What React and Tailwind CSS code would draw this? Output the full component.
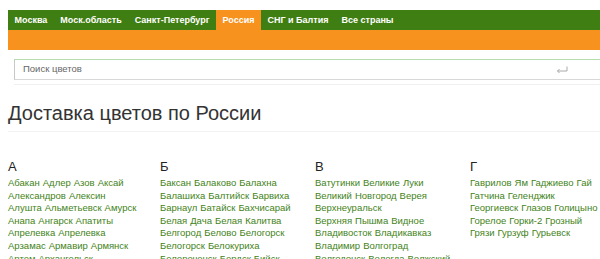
const navItems = [
  { label: 'Москва' },
  { label: 'Моск.область' },
  { label: 'Санкт-Петербург' },
  { label: 'Россия', active: true },
  { label: 'СНГ и Балтия' },
  { label: 'Все страны' },
];

const columns = [
  {
    letter: 'А',
    cities: [
      'Абакан Адлер Азов Аксай',
      'Александров Алексин',
      'Алушта Альметьевск Амурск',
      'Анапа Ангарск Апатиты',
      'Апрелевка Апрелевка',
      'Арзамас Армавир Армянск',
      'Артем Архангельск',
    ],
  },
  {
    letter: 'Б',
    cities: [
      'Баксан Балаково Балахна',
      'Балашиха Балтийск Барвиха',
      'Барнаул Батайск Бахчисарай',
      'Белая Дача Белая Калитва',
      'Белгород Белово Белогорск',
      'Белогорск Белокуриха',
      'Белореченск Бердск Бийск',
    ],
  },
  {
    letter: 'В',
    cities: [
      'Ватутинки Великие Луки',
      'Великий Новгород Верея',
      'Верхнеуральск',
      'Верхняя Пышма Видное',
      'Владивосток Владикавказ',
      'Владимир Волгоград',
      'Волгодонск Вологда Волжский',
    ],
  },
  {
    letter: 'Г',
    cities: [
      'Гаврилов Ям Гаджиево Гай',
      'Гатчина Геленджик',
      'Георгиевск Глазов Голицыно',
      'Горелое Горки-2 Грозный',
      'Грязи Гурзуф Гурьевск',
    ],
  },
];

const App = () => {
  return (
    <div className="w-[600px] h-[259px] overflow-hidden bg-white font-['Liberation_Sans',Arial,sans-serif]">
      <div className="pl-[8px] pt-[10px]">
        {/* Top navigation */}
        <nav className="flex h-[20px] bg-[#3f7e12]">
          {navItems.map((item) => (
            <a
              key={item.label}
              href="#"
              className={`flex items-center px-[6.5px] text-[9px] font-bold text-white leading-none ${
                item.active ? 'bg-[#f7921e]' : ''
              }`}
            >
              {item.label}
            </a>
          ))}
        </nav>
        <div className="h-[20px] bg-[#f7921e]"></div>
      </div>

      {/* Search */}
      <div className="pl-[14px] pt-[9px]">
        <div className="flex items-center h-[21px] border-t border-t-[#b6dcae] border-l border-l-[#c8c8c8] border-b border-b-[#d8d8d8] bg-white">
          <input
            type="text"
            placeholder="Поиск цветов"
            className="flex-grow pl-[8px] text-[9.5px] text-[#555] placeholder-[#666] focus:outline-none bg-transparent"
          />
          <svg width="12" height="8" viewBox="0 0 12 8" className="mr-[32px] text-[#aaa]">
            <path d="M11 0.5 V5 H1.5 M3.5 3 L1.5 5 L3.5 7" fill="none" stroke="currentColor" strokeWidth="1" />
          </svg>
        </div>
        <div className="mt-[4px] h-px bg-[#f0f0f0]"></div>
      </div>

      {/* Heading */}
      <h1 className="pl-[8px] pt-[16px] text-[20px] leading-[24px] text-[#333] font-normal">
        Доставка цветов по России
      </h1>
      <div className="ml-[8px] mt-[6px] h-px bg-[#f3f3f3]"></div>

      {/* City columns */}
      <div className="grid grid-cols-[152px_155px_155px_130px] pl-[8px] pt-[28px]">
        {columns.map((col) => (
          <div key={col.letter}>
            <div className="text-[13px] leading-[14px] text-[#222]">{col.letter}</div>
            <ul className="mt-[3px]">
              {col.cities.map((line) => (
                <li key={line} className="text-[9.5px] leading-[12.6px] text-[#438318] whitespace-nowrap">
                  {line.split(' ').map((w, i) => (
                    <a key={i} href="#" className="mr-[3px]">
                      {w}
                    </a>
                  ))}
                </li>
              ))}
            </ul>
          </div>
        ))}
      </div>
    </div>
  );
};

export default App;
